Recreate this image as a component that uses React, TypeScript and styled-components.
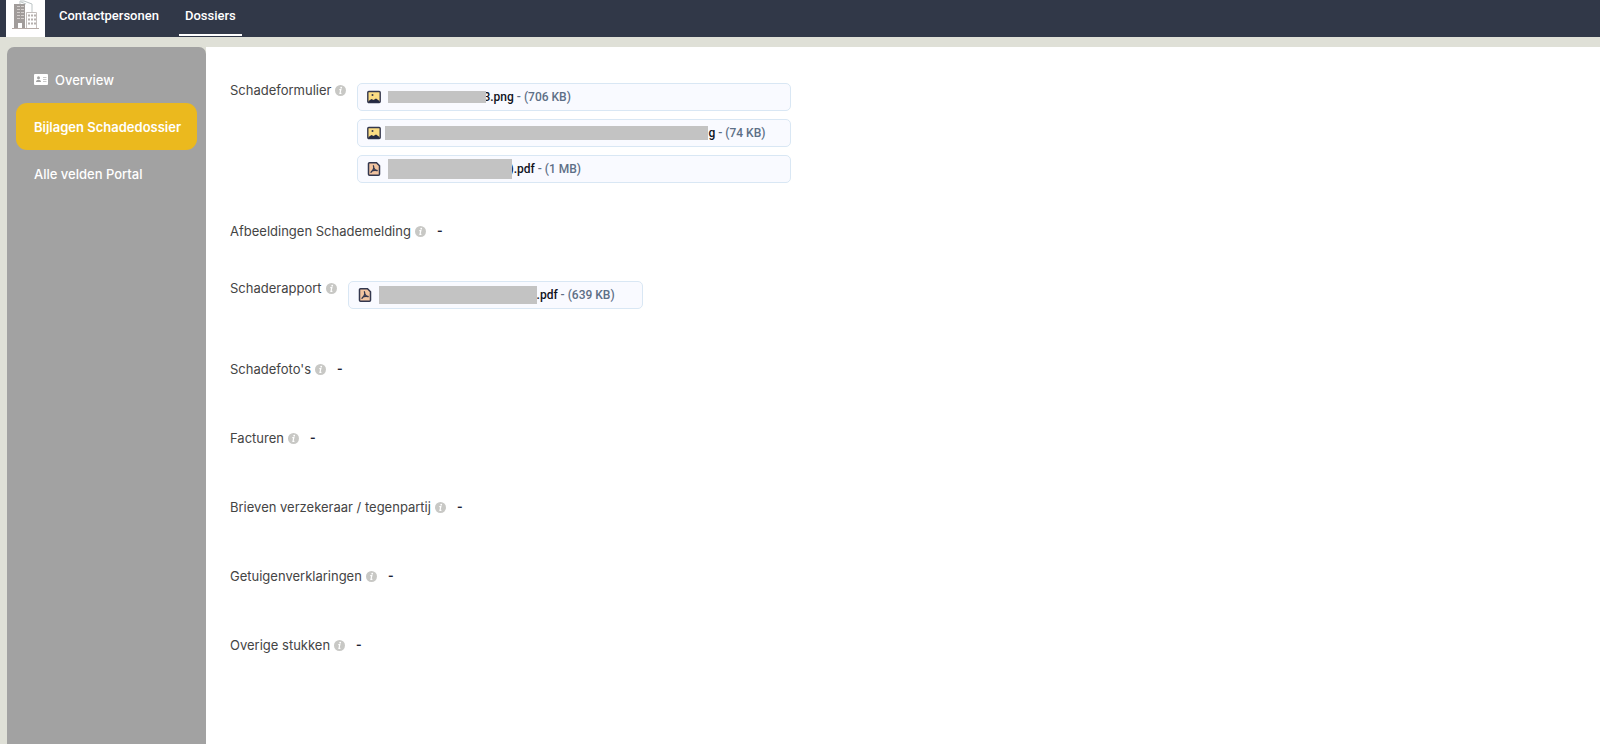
import React from "react";
import styled, { createGlobalStyle } from "styled-components";

const GlobalStyle = createGlobalStyle`
  *, *::before, *::after { box-sizing: border-box; }
  body {
    margin: 0;
    background: #dfe0d7;
    font-family: Inter, "Liberation Sans", sans-serif;
    color: #444;
  }
  a { color: inherit; text-decoration: none; }
`;

const Page = styled.div`
  display: flex;
  flex-direction: column;
  min-height: 100vh;
`;

const TopBar = styled.header`
  display: flex;
  align-items: stretch;
  height: 37px;
  padding-left: 6px;
  background: #313848;
`;

const Logo = styled.a`
  display: flex;
  justify-content: center;
  width: 39px;
  background: #fff;
`;

const TopNav = styled.nav`
  display: flex;
  gap: 14px;
  padding-left: 8px;
`;

const TopLink = styled.a<{ $active?: boolean }>`
  padding: 6px 6px 0;
  border-bottom: 2px solid ${(p) => (p.$active ? "#fff" : "transparent")};
  margin-bottom: 1px;
  font-family: Roboto, "Liberation Sans", sans-serif;
  font-size: 13px;
  font-weight: 500;
  line-height: 20px;
  color: #fff;
`;

const Body = styled.div`
  display: flex;
  flex: 1;
  padding: 10px 0 0 7px;
`;

const Sidebar = styled.nav`
  display: flex;
  flex-direction: column;
  flex: none;
  width: 199px;
  padding: 9px;
  border-radius: 7px 7px 0 0;
  background: #a2a2a2;
`;

const SideLink = styled.a<{ $active?: boolean }>`
  display: flex;
  align-items: center;
  gap: 7px;
  height: 47px;
  padding-left: 18px;
  border-radius: 11px;
  background: ${(p) => (p.$active ? "#ebb91e" : "transparent")};
  font-size: 13px;
  font-weight: ${(p) => (p.$active ? 600 : 500)};
  color: #fff;
  white-space: nowrap;
`;

const Main = styled.main`
  flex: 1;
  padding: 33px 24px 40px;
  background: #fff;
`;

const Field = styled.section<{ $tight?: boolean }>`
  display: flex;
  align-items: flex-start;
  margin-bottom: ${(p) => (p.$tight ? 37 : 49)}px;
`;

const Label = styled.h2`
  margin: 0 4px 0 0;
  font-size: 13px;
  font-weight: 400;
  line-height: 20px;
  color: #444;
`;

const InfoButton = styled.button`
  display: flex;
  margin: 5px 11px 0 0;
  padding: 0;
  border: 0;
  background: none;
`;

const Empty = styled.span`
  font-size: 12px;
  font-weight: 700;
  line-height: 20px;
  color: #1c2233;
`;

const Files = styled.ul<{ $wide?: boolean }>`
  display: grid;
  gap: 8px;
  width: ${(p) => (p.$wide ? 434 : 295)}px;
  margin: 3px 0 1px;
  padding: 0;
  list-style: none;
`;

const FileLink = styled.a`
  display: flex;
  align-items: center;
  height: 28px;
  padding: 0 9px 1px;
  border: 1px solid #d9e7f4;
  border-radius: 5px;
  background: #f9faff;
  font-family: Roboto, "Liberation Sans", sans-serif;
  font-size: 12px;
  font-weight: 500;
  color: #10131c;
  white-space: pre;

  svg { flex: none; }
`;

const Mask = styled.span<{ $width: number; $height: number; $close?: boolean; $overlap?: boolean }>`
  position: relative;
  flex: none;
  width: ${(p) => p.$width}px;
  height: ${(p) => p.$height}px;
  margin-left: ${(p) => (p.$close ? 4 : 7)}px;
  margin-right: ${(p) => (p.$overlap ? -3 : 0)}px;
  background: #c3c3c3;
`;

const Size = styled.span`
  color: #5d6f86;
`;

const LogoMark = () => (
  <svg width="28" height="30" viewBox="0 0 28 30" aria-hidden="true">
    <path d="M2 4h11v24H2z" fill="#a19c9a" />
    <path d="M5 6.500h3M9 6.500h3M5 9.500h3M9 9.500h3M5 12.500h3M9 12.500h3M5 15.500h3M9 15.500h3M5 18.500h3M9 18.500h3" stroke="#d4cfcd" />
    <path d="M6 23h4v5H6z" fill="#fff" />
    <path d="M8 4V1h4l8 3v8M9 2l5 2" fill="none" stroke="#bdc5c6" />
    <path d="M14.500 12.500h10v16h-10z" fill="#fff" stroke="#c4bfbd" />
    <path d="M16 15.500h8M16 19.500h8M16 23.500h8" stroke="#b5b0ae" strokeWidth="2" strokeDasharray="2 1" />
    <path d="M0 28.500h27" stroke="#b5aaa6" />
  </svg>
);

const CardIcon = () => (
  <svg width="14" height="11" viewBox="0 0 14 11" aria-hidden="true">
    <rect width="14" height="11" rx="1" fill="#fff" />
    <circle cx="4.500" cy="3.800" r="1.500" fill="#a2a2a2" />
    <path d="M2 8c0-3 5-3 5 0z" fill="#a2a2a2" />
    <path d="M9 3.500h3.500M9 5.500h3.500M9 7.500h3.500" stroke="#c8c8c8" />
  </svg>
);

const InfoIcon = () => (
  <svg width="11" height="11" viewBox="0 0 11 11" aria-hidden="true">
    <circle cx="5.500" cy="5.500" r="5.500" fill="#c8c8c5" />
    <circle cx="6.200" cy="2.700" r=".9" fill="#fff" />
    <path d="M4.300 4.700h1.500l-.8 3.600h1.400" fill="none" stroke="#fff" strokeWidth="1.200" />
  </svg>
);

const ImageIcon = () => (
  <svg width="14" height="14" viewBox="0 0 14 14" aria-hidden="true">
    <rect x=".8" y="1.500" width="12.400" height="11" rx="1" fill="#fbdc83" stroke="#33374e" strokeWidth="1.400" />
    <path d="M1.500 12.500v-1.500l3-2 2 1L9 8.500l3.500 2.500v1.500z" fill="#252a42" />
    <circle cx="5.500" cy="5" r="1" fill="#33374e" />
  </svg>
);

const PdfIcon = () => (
  <svg width="14" height="14" viewBox="0 0 14 14" aria-hidden="true">
    <path d="M2.500.8h7l3 3v8.400a1 1 0 0 1-1 1h-9a1 1 0 0 1-1-1V1.800a1 1 0 0 1 1-1z" fill="#f2c4a0" stroke="#33374e" strokeWidth="1.500" />
    <path d="M6.400 3.800c1 2.200.2 4.200-2.400 6.500M6.800 6c.6 1.500 1.800 2.300 3.400 2.600M4.500 9.300c1.600-1 3.500-1.200 5.500-.8" fill="none" stroke="#33374e" strokeWidth="1.300" strokeLinecap="round" />
  </svg>
);

interface FileEntry {
  kind: "image" | "pdf";
  ending: string;
  size: string;
  mask: number;
  maskHeight: number;
  close?: boolean;
  overlap?: boolean;
}

interface FieldEntry {
  label: string;
  tight?: boolean;
  wide?: boolean;
  files?: FileEntry[];
}

const fields: FieldEntry[] = [
  {
    label: "Schadeformulier",
    tight: true,
    wide: true,
    files: [
      { kind: "image", ending: "3.png", size: "706 KB", mask: 98, maskHeight: 12, overlap: true },
      { kind: "image", ending: "g", size: "74 KB", mask: 323, maskHeight: 14, close: true },
      { kind: "pdf", ending: ").pdf", size: "1 MB", mask: 124, maskHeight: 20, overlap: true },
    ],
  },
  { label: "Afbeeldingen Schademelding", tight: true },
  {
    label: "Schaderapport",
    files: [{ kind: "pdf", ending: ".pdf", size: "639 KB", mask: 158, maskHeight: 18 }],
  },
  { label: "Schadefoto's" },
  { label: "Facturen" },
  { label: "Brieven verzekeraar / tegenpartij" },
  { label: "Getuigenverklaringen" },
  { label: "Overige stukken" },
];

export default function App() {
  return (
    <Page>
      <GlobalStyle />
      <TopBar>
        <Logo href="#" aria-label="Home">
          <LogoMark />
        </Logo>
        <TopNav>
          <TopLink href="#contactpersonen">Contactpersonen</TopLink>
          <TopLink href="#dossiers" $active>Dossiers</TopLink>
        </TopNav>
      </TopBar>
      <Body>
        <Sidebar>
          <SideLink href="#overview">
            <CardIcon />
            Overview
          </SideLink>
          <SideLink href="#bijlagen" $active>Bijlagen Schadedossier</SideLink>
          <SideLink href="#velden">Alle velden Portal</SideLink>
        </Sidebar>
        <Main>
          {fields.map((field) => (
            <Field key={field.label} $tight={field.tight}>
              <Label>{field.label}</Label>
              <InfoButton type="button" aria-label={`Info ${field.label}`}>
                <InfoIcon />
              </InfoButton>
              {field.files ? (
                <Files $wide={field.wide}>
                  {field.files.map((file) => (
                    <li key={file.size}>
                      <FileLink href="#bestand">
                        {file.kind === "image" ? <ImageIcon /> : <PdfIcon />}
                        <Mask
                          $width={file.mask}
                          $height={file.maskHeight}
                          $close={file.close}
                          $overlap={file.overlap}
                        />
                        {file.ending}
                        <Size> - ({file.size})</Size>
                      </FileLink>
                    </li>
                  ))}
                </Files>
              ) : (
                <Empty>-</Empty>
              )}
            </Field>
          ))}
        </Main>
      </Body>
    </Page>
  );
}
